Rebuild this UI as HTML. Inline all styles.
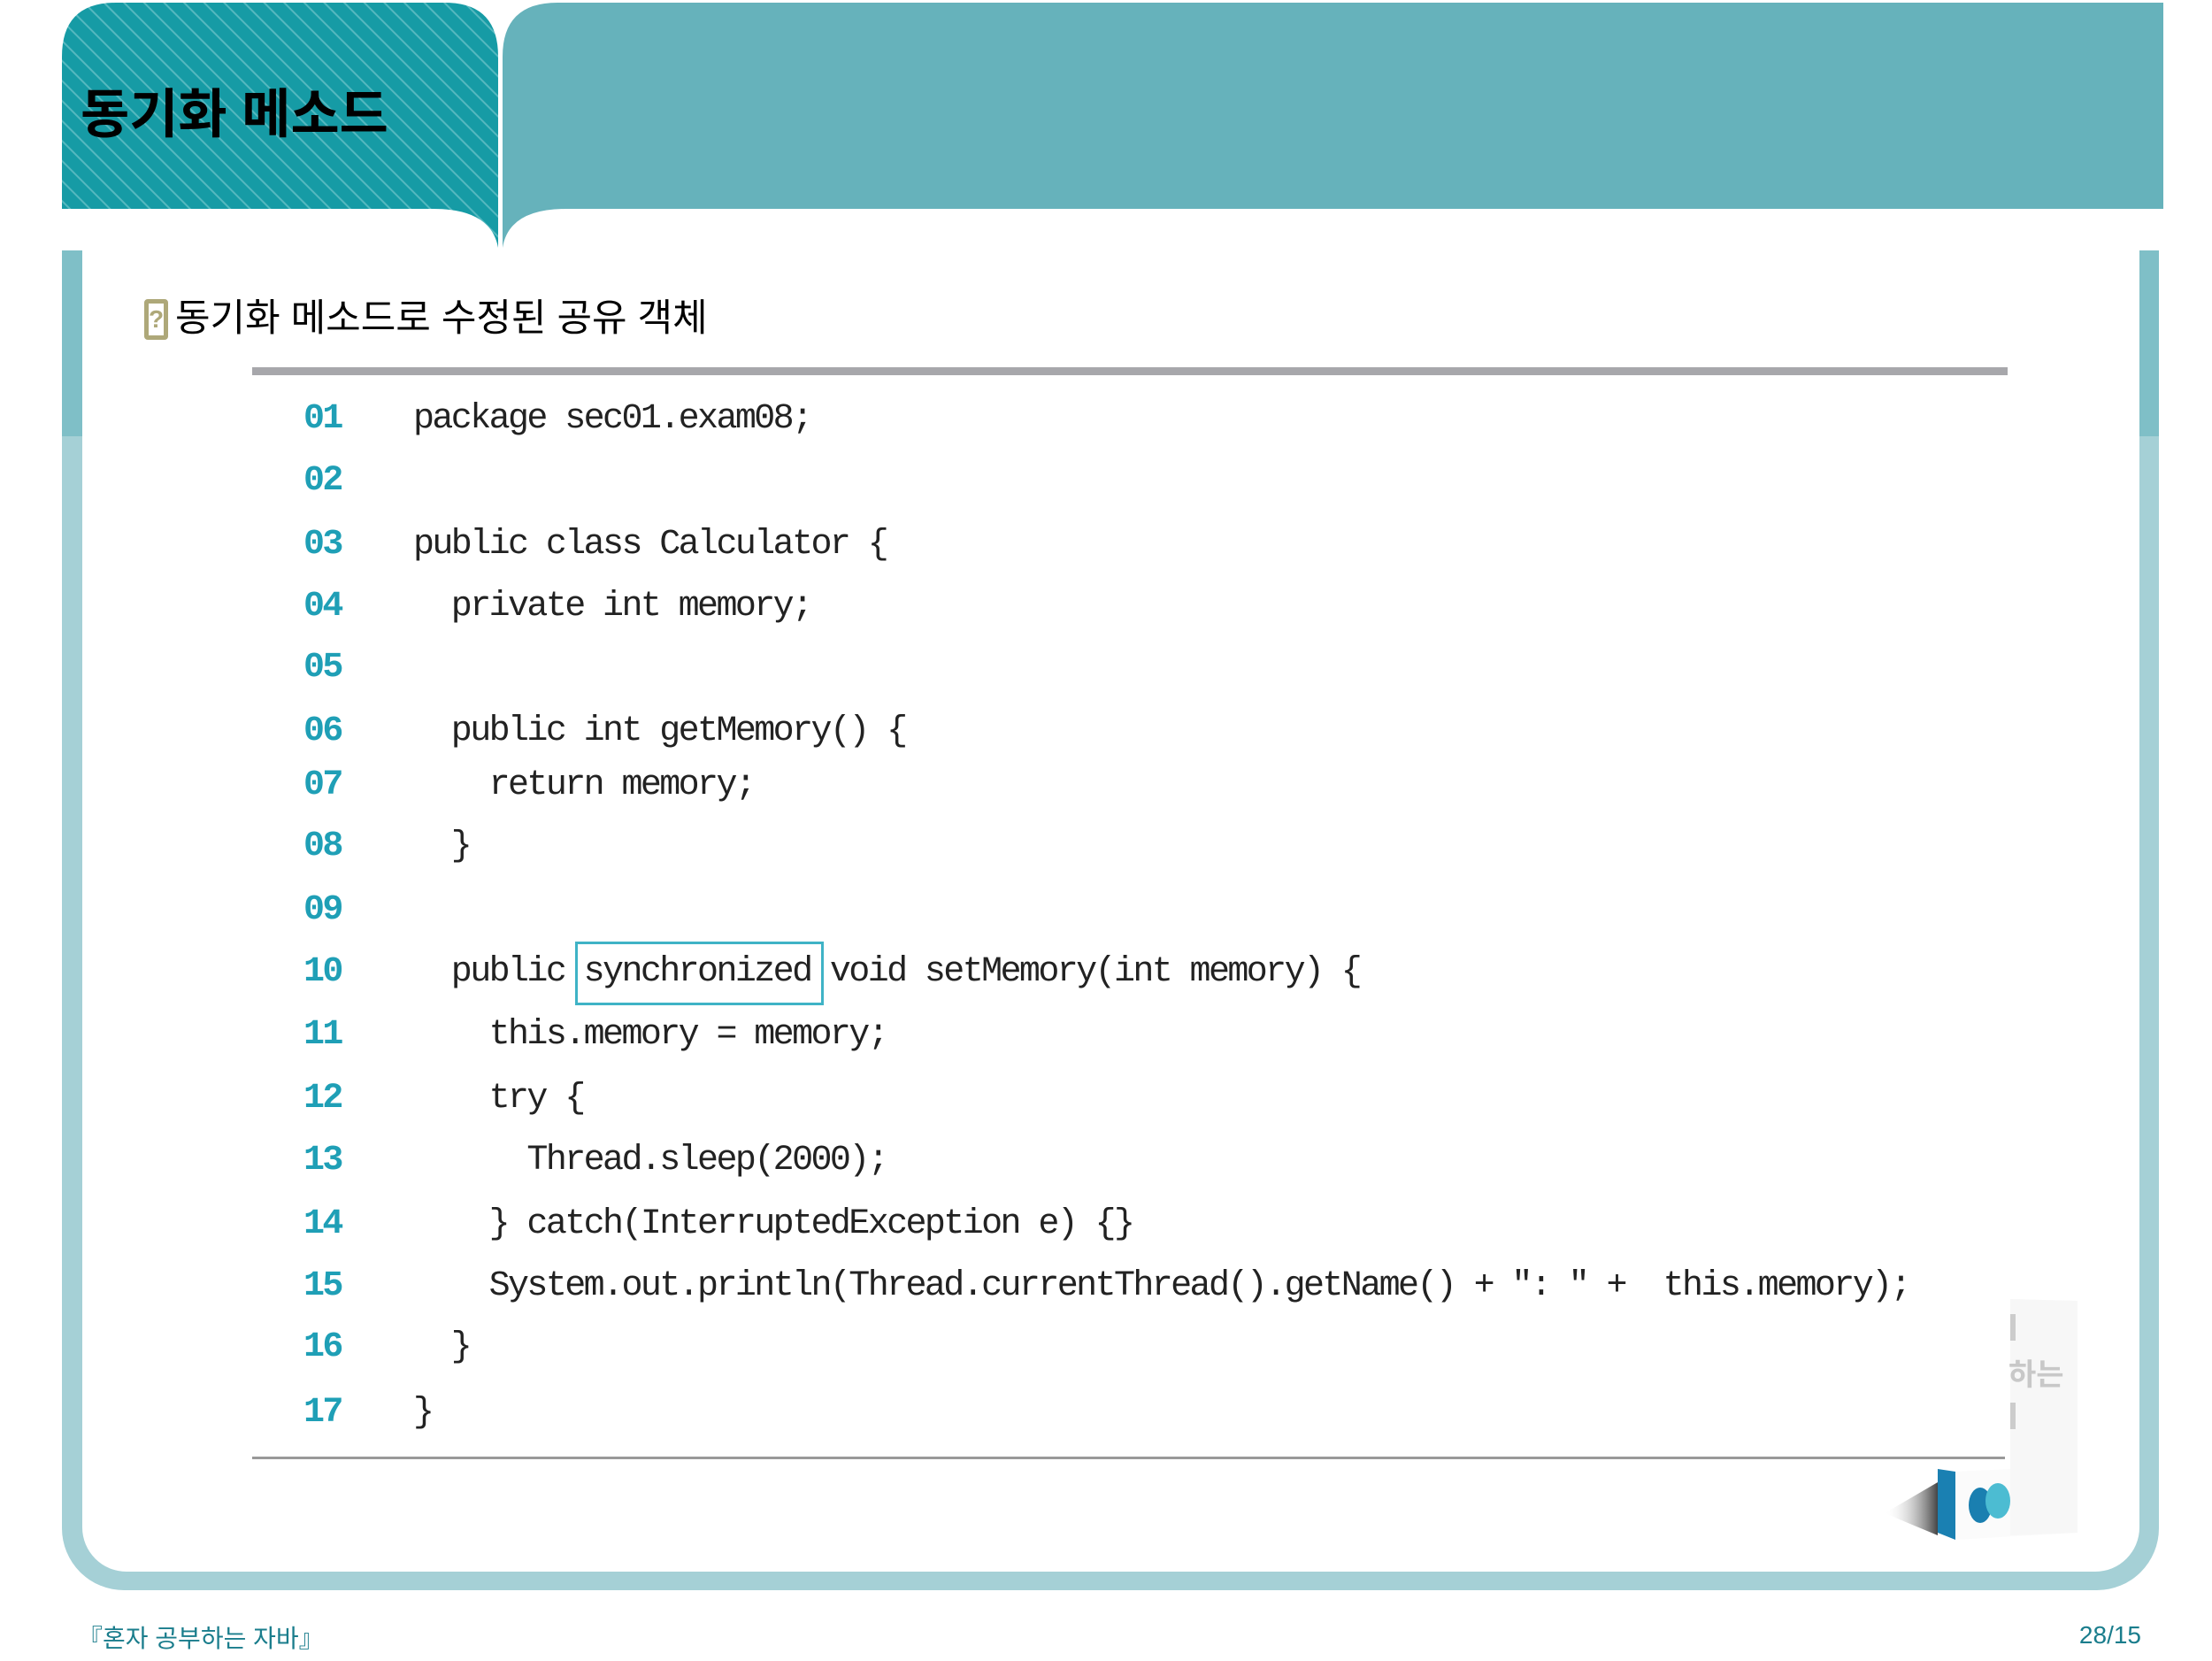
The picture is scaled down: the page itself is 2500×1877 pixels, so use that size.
<!DOCTYPE html>
<html><head><meta charset="utf-8">
<style>
*{margin:0;padding:0;box-sizing:border-box}
body{width:2500px;height:1877px;background:#fff;position:relative;overflow:hidden;font-family:"Liberation Sans","Noto Sans CJK KR",sans-serif}
.abs{position:absolute}
.code{position:absolute;font-family:"Liberation Mono","DejaVu Sans Mono",monospace;font-size:40px;line-height:50px;letter-spacing:-2.6px;white-space:pre;color:#222}
.ln{position:absolute;left:343px;font-family:"Liberation Mono","DejaVu Sans Mono",monospace;font-size:40px;line-height:50px;letter-spacing:-2.6px;color:#1f9fb6;font-weight:bold}
</style></head><body>
<svg class="abs" style="left:0;top:0" width="2500" height="300" viewBox="0 0 2500 300">
<defs>
<pattern id="st" width="16" height="16" patternUnits="userSpaceOnUse" patternTransform="rotate(-45)">
<rect width="16" height="16" fill="#169ba5"/><rect width="2" height="16" fill="#55b8bf"/>
</pattern>
</defs>
<path d="M70 236 L70 64 Q70 3 131 3 L503 3 Q563 3 563 64 L563 280 Q555 236 490 236 Z" fill="url(#st)"/>
<path d="M568 280 L568 64 Q568 3 630 3 L2445 3 L2445 236 L640 236 Q575 236 568 280 Z" fill="#66b2bb"/>
</svg>
<div class="abs" style="left:91px;top:94px;font-size:60px;font-weight:bold;color:#000;line-height:72px">동기화 메소드</div>
<!-- frame -->
<div class="abs" style="left:70px;top:283px;width:2370px;height:1514px;background:#a5d0d6;border-radius:0 0 70px 70px"></div>
<div class="abs" style="left:70px;top:283px;width:23px;height:210px;background:#7fbfc7"></div>
<div class="abs" style="left:2418px;top:283px;width:22px;height:210px;background:#7fbfc7"></div>
<div class="abs" style="left:93px;top:283px;width:2325px;height:1493px;background:#fff;border-radius:0 0 50px 50px"></div>
<!-- subtitle -->
<div class="abs" style="left:163px;top:338px;width:27px;height:46px;border:5px solid #aea879;border-radius:4px;background:#fff;color:#aea879;font-size:28px;line-height:36px;text-align:center;font-weight:bold">?</div>
<div class="abs" style="left:198px;top:332px;font-size:43px;line-height:56px;color:#000">동기화 메소드로 수정된 공유 객체</div>
<div class="abs" style="left:285px;top:415px;width:1984px;height:9px;background:#a7a7ab"></div>
<div class="abs" style="left:285px;top:1646px;width:1981px;height:3px;background:#999"></div>
<!-- code -->
<div class="ln" style="top:449px">01</div><div class="code" style="left:467px;top:449px">package sec01.exam08;</div>
<div class="ln" style="top:519px">02</div>
<div class="ln" style="top:591px">03</div><div class="code" style="left:467px;top:591px">public class Calculator {</div>
<div class="ln" style="top:661px">04</div><div class="code" style="left:467px;top:661px">  private int memory;</div>
<div class="ln" style="top:730px">05</div>
<div class="ln" style="top:802px">06</div><div class="code" style="left:467px;top:802px">  public int getMemory() {</div>
<div class="ln" style="top:863px">07</div><div class="code" style="left:467px;top:863px">    return memory;</div>
<div class="ln" style="top:932px">08</div><div class="code" style="left:467px;top:932px">  }</div>
<div class="ln" style="top:1004px">09</div>
<div class="ln" style="top:1074px">10</div><div class="code" style="left:467px;top:1074px">  public synchronized void setMemory(int memory) {</div>
<div class="abs" style="left:650px;top:1064px;width:281px;height:72px;border:3px solid #3fb3c6"></div>
<div class="ln" style="top:1145px">11</div><div class="code" style="left:467px;top:1145px">    this.memory = memory;</div>
<div class="ln" style="top:1217px">12</div><div class="code" style="left:467px;top:1217px">    try {</div>
<div class="ln" style="top:1287px">13</div><div class="code" style="left:467px;top:1287px">      Thread.sleep(2000);</div>
<div class="ln" style="top:1359px">14</div><div class="code" style="left:467px;top:1359px">    } catch(InterruptedException e) {}</div>
<div class="ln" style="top:1429px">15</div><div class="code" style="left:467px;top:1429px">    System.out.println(Thread.currentThread().getName() + ": " +  this.memory);</div>
<div class="ln" style="top:1498px">16</div><div class="code" style="left:467px;top:1498px">  }</div>
<div class="ln" style="top:1572px">17</div><div class="code" style="left:467px;top:1572px">}</div>
<!-- book -->
<svg class="abs" style="left:2120px;top:1460px" width="260" height="300" viewBox="0 0 260 300">
<defs><linearGradient id="sh" x1="0" x2="1"><stop offset="0" stop-color="#fff" stop-opacity="0"/><stop offset="1" stop-color="#444"/></linearGradient></defs>
<path d="M10 250 L70 215 L70 275 Z" fill="url(#sh)"/>
<path d="M70 200 L90 203 L90 280 L70 272 Z" fill="#1a80b2"/>
<path d="M90 203 L152 200 L152 8 L228 10 L228 272 L90 280 Z" fill="#fbfbfb"/>
<path d="M152 8 L228 10 L228 272 L152 275 Z" fill="#f7f7f7"/>
<text x="150" y="105" font-size="34" font-weight="bold" fill="#c8c8c8" font-family="Liberation Sans, Noto Sans CJK KR, sans-serif">하는</text>
<rect x="152" y="25" width="6" height="30" fill="#ccc"/><rect x="152" y="125" width="6" height="30" fill="#ccc"/>
<ellipse cx="118" cy="241" rx="13" ry="20" fill="#1a7fb0"/>
<ellipse cx="138" cy="236" rx="14" ry="20" fill="#4cbcd2"/>
</svg>
<!-- footer -->
<div class="abs" style="left:88px;top:1834px;font-size:28px;line-height:36px;color:#1a7d8c">『혼자 공부하는 자바』</div>
<div class="abs" style="left:2340px;top:1830px;width:80px;text-align:right;font-size:28px;line-height:36px;color:#1a7d8c">28/15</div>
</body></html>
